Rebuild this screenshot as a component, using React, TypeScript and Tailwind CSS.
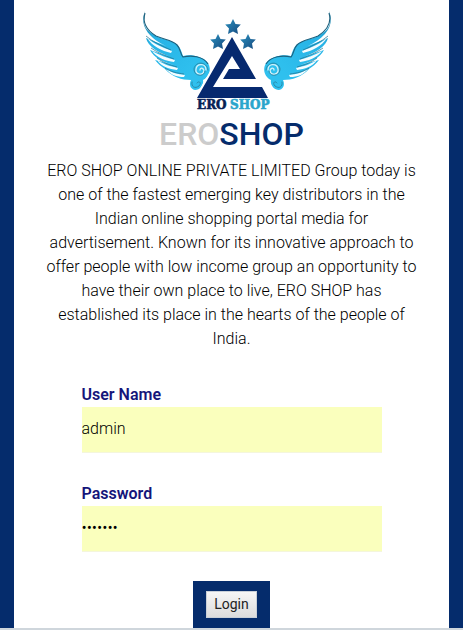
import React from "react";

const STAR =
  "M0 -8 L2.5 -3.1 L7.8 -2.6 L4 1.4 L5 7 L0 4.6 L-5 7 L-4 1.4 L-7.8 -2.6 L-2.5 -3.1 Z";

function Wing() {
  return (
    <g>
      <path
        d="M145 11 C143 20 143 27 150 32 C158 39 166 39 173 42 C180 45 181 50 183 56 C190 54 203 56 208 63 C212 70 209 77 203 80 C204 85 200 90 195 90 C190 89 189 84 191 80 C182 80 172 77 165 69 L179 73 C169 72 161 68 155 60 L174 65 C163 62 154 58 150 50 L170 57 C157 52 148 46 146 38 L166 46 C153 40 138 28 145 11 Z"
        fill="url(#wing)"
      />
      <path
        d="M145 13 C142 23 148 31 156 36 C165 40 172 40 177 45 C181 49 180 54 183 57 C191 55 203 56 208 64"
        fill="none"
        stroke="#1c5f7c"
        strokeWidth="1.1"
      />
      <path
        d="M147 38 C154 44 162 47 172 51 L171 53 C162 51 152 46 147 38 Z M152 51 C159 55 167 58 175 60 L174 62 C166 61 157 58 152 51 Z M157 60 C165 65 170 66 178 68 L177 70 C169 69 162 67 157 60 Z M166 69 C173 73 177 74 185 75 L184 77 C176 77 171 75 166 69 Z"
        fill="#f6fcfe"
      />
      <path
        d="M146 36 C153 42 162 46 171 50 M151 48 C158 53 166 56 174 59 M157 58 C164 63 170 65 177 67 M165 68 C171 72 177 73 184 74"
        fill="none"
        stroke="#24708c"
        strokeWidth="0.7"
      />
      <path
        d="M206 70 C206 63 197 63 196 69 C195 75 203 76 204 71 C204 68 200 67 200 70"
        fill="none"
        stroke="#d4f1f8"
        strokeWidth="1.3"
        strokeLinecap="round"
      />
      <path
        d="M208 70 C207 61 195 61 194 69 C194 77 205 77 205 71 M192 82 C191 87 195 89 199 86 C202 83 199 80 197 83"
        fill="none"
        stroke="#2783a2"
        strokeWidth="0.9"
        strokeLinecap="round"
      />
    </g>
  );
}

function Logo() {
  return (
    <svg
      viewBox="130 0 203 112"
      className="block h-[112px] w-[203px]"
      role="img"
      aria-label="ERO SHOP"
    >
      <defs>
        <linearGradient id="wing" x1="0" y1="0" x2="0.7" y2="0.8">
          <stop offset="0" stopColor="#1d789c" />
          <stop offset="0.35" stopColor="#27b3e6" />
          <stop offset="1" stopColor="#2fc0ee" />
        </linearGradient>
        <linearGradient id="star" x1="0" y1="0" x2="1" y2="1">
          <stop offset="0" stopColor="#2b91bf" />
          <stop offset="1" stopColor="#16497f" />
        </linearGradient>
      </defs>
      <Wing />
      <g transform="matrix(-1 0 0 1 474 0)">
        <Wing />
      </g>
      <path d="M232 33 L271 99 L194 99 Z" fill="#fff" />
      <path
        fillRule="evenodd"
        d="M232 37 L256 79 L223 79 L229 69 L240 69 L232 56 L213 87 L262 87 L268 98 L197 98 Z"
        fill="#06296f"
      />
      <path d={STAR} transform="translate(233 27)" fill="url(#star)" />
      <path d={STAR} transform="translate(218 42)" fill="url(#star)" />
      <path d={STAR} transform="translate(248 42)" fill="url(#star)" />
      <text
        x="197"
        y="109"
        strokeWidth="0.6"
        className="fill-[#071f55] stroke-[#071f55] font-['DejaVu_Serif',serif] text-[12px] font-bold"
      >
        ERO
      </text>
      <text
        x="230"
        y="109"
        strokeWidth="0.6"
        className="fill-[#2aa5cc] stroke-[#2aa5cc] font-['DejaVu_Serif',serif] text-[12px] font-bold"
      >
        SHOP
      </text>
    </svg>
  );
}

type FieldProps = {
  id: string;
  label: string;
  type: string;
  value: string;
};

function Field({ id, label, type, value }: FieldProps) {
  return (
    <div className="flex flex-col">
      <label htmlFor={id} className="text-base font-semibold text-[#15157a]">
        {label}
      </label>
      <input
        id={id}
        type={type}
        defaultValue={value}
        className="h-[46px] w-full border-b border-[#f4f6dc] bg-[#faffbd] pb-0.5 text-base font-light text-black outline-none"
      />
    </div>
  );
}

export default function App() {
  return (
    <div className="border-b-2 border-[#cfd6dc] bg-[#052c6c] px-3.5 font-[Roboto,sans-serif]">
      <main className="flex flex-col items-center bg-white px-8">
        <Logo />
        <h1 className="mt-1 text-[32px] leading-9 font-medium text-[#052c6c]">
          <span className="text-[#cccccc]">ERO</span>SHOP
        </h1>
        <p className="mt-[7px] text-center text-base font-light text-black">
          ERO SHOP ONLINE PRIVATE LIMITED Group today is one of the fastest
          emerging key distributors in the Indian online shopping portal media
          for advertisement. Known for its innovative approach to offer people
          with low income group an opportunity to have their own place to live,
          ERO SHOP has established its place in the hearts of the people of
          India.
        </p>
        <form
          className="mt-8 flex w-full max-w-[300px] flex-col items-center gap-[29px]"
          onSubmit={(event) => event.preventDefault()}
        >
          <div className="flex w-full flex-col gap-[29px]">
            <Field id="username" label="User Name" type="text" value="admin" />
            <Field
              id="password"
              label="Password"
              type="password"
              value="1234567"
            />
          </div>
          <div className="bg-[#052c6c] px-[13px] py-2.5">
            <button
              type="submit"
              className="block border border-[#c9d0d8] bg-linear-to-b from-[#f6f6f6] to-[#dcdcdc] px-[7px] py-0.5 text-sm leading-[21px] text-[#222]"
            >
              Login
            </button>
          </div>
        </form>
      </main>
    </div>
  );
}
